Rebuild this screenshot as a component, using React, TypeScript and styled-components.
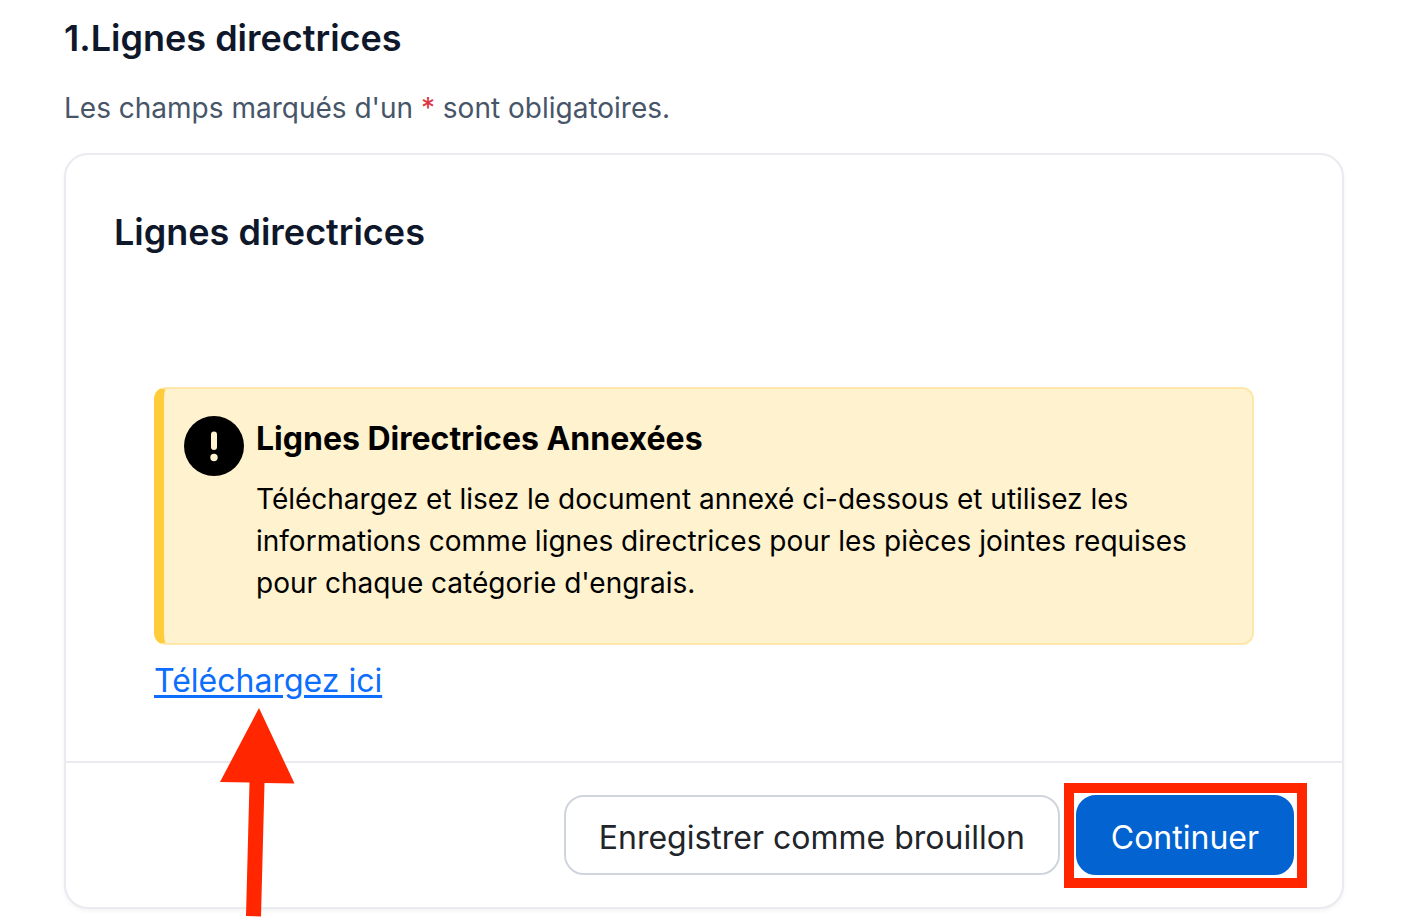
import React from "react";
import styled, { createGlobalStyle } from "styled-components";

const GlobalStyle = createGlobalStyle`
  *, *::before, *::after { box-sizing: border-box; }
  body {
    margin: 0;
    background: #fff;
    color: #000;
    font-family: Inter, "Liberation Sans", sans-serif;
    font-size: 28px;
    line-height: 42px;
  }
  h1, h2, h3, p { margin: 0; }
`;

const Page = styled.main`
  padding: 14px 73px 14px 64px;
`;

const PageTitle = styled.h1`
  margin-bottom: 25px;
  color: #0f172a;
  font-size: 36px;
  font-weight: 600;
  line-height: 48px;
`;

const Hint = styled.p`
  margin-bottom: 24px;
  color: #475569;
`;

const Required = styled.span`
  color: #dc3545;
`;

const Card = styled.section`
  border: 2px solid #eaebf0;
  border-radius: 24px;
  background: #fff;
  box-shadow: 0 2px 4px rgba(16, 24, 40, 0.05);
`;

const CardBody = styled.div`
  padding: 53px 48px 56px;
`;

const CardTitle = styled.h2`
  color: #0f172a;
  font-size: 36px;
  font-weight: 600;
  line-height: 48px;
`;

const Content = styled.div`
  padding: 131px 40px 0;
`;

const Alert = styled.div`
  display: flex;
  align-items: flex-start;
  gap: 12px;
  margin-bottom: 12px;
  padding: 26px 48px 39px 20px;
  border: 2px solid #ffe7ac;
  border-left: 10px solid #ffcd39;
  border-radius: 12px;
  background: #fff2cf;
`;

const AlertIcon = styled.svg`
  flex: none;
  width: 60px;
  height: 60px;
  margin-top: 1px;
`;

const AlertTitle = styled.h3`
  margin-bottom: 15px;
  font-size: 32px;
  font-weight: 700;
  line-height: 48px;
`;

const LinkRow = styled.div`
  position: relative;
  font-size: 32px;
  line-height: 48px;
`;

const DownloadLink = styled.a`
  color: #0d6efd;
  text-decoration: underline;
  text-decoration-thickness: 3px;
  text-underline-offset: 3px;
`;

const Arrow = styled.svg`
  position: absolute;
  top: 48px;
  left: 64px;
  width: 80px;
  height: 212px;
  pointer-events: none;
`;

const CardFooter = styled.footer`
  display: flex;
  justify-content: flex-end;
  gap: 16px;
  padding: 32px 48px;
  border-top: 2px solid #eaebf0;
`;

const Button = styled.button<{ $primary?: boolean }>`
  height: 80px;
  padding: 5px 33px 0;
  border: 2px solid ${(p) => (p.$primary ? "#0263d1" : "#d0d5dd")};
  border-radius: 20px;
  background: ${(p) => (p.$primary ? "#0263d1" : "#fff")};
  color: ${(p) => (p.$primary ? "#fff" : "#212529")};
  font: inherit;
  font-size: 32px;
  line-height: 48px;
  white-space: nowrap;
  cursor: pointer;
`;

const Highlight = styled.div`
  position: relative;
  &::after {
    content: "";
    position: absolute;
    inset: -12px -13px -13px -12px;
    border: 10px solid #ff2600;
    pointer-events: none;
  }
`;

export default function App() {
  return (
    <>
      <GlobalStyle />
      <Page>
        <PageTitle>1.Lignes directrices</PageTitle>
        <Hint>
          Les champs marqués d'un <Required>*</Required> sont obligatoires.
        </Hint>
        <Card>
          <CardBody>
            <CardTitle>Lignes directrices</CardTitle>
            <Content>
              <Alert role="alert">
                <AlertIcon viewBox="0 0 60 60" aria-hidden="true">
                  <circle cx="30" cy="30" r="30" fill="#000" />
                  <rect x="27" y="15.5" width="6" height="18.5" rx="3" fill="#fff2cf" />
                  <circle cx="30" cy="41.5" r="3.7" fill="#fff2cf" />
                </AlertIcon>
                <div>
                  <AlertTitle>Lignes Directrices Annexées</AlertTitle>
                  <p>
                    Téléchargez et lisez le document annexé ci-dessous et utilisez les
                    informations comme lignes directrices pour les pièces jointes requises
                    pour chaque catégorie d'engrais.
                  </p>
                </div>
              </Alert>
              <LinkRow>
                <DownloadLink href="#telecharger">Téléchargez ici</DownloadLink>
                <Arrow viewBox="0 0 80 212" aria-hidden="true">
                  <path
                    d="M41 3 76.500 78.500 46.500 78 43 211.500 28 211 31.500 77.500 2 77Z"
                    fill="#ff2600"
                  />
                </Arrow>
              </LinkRow>
            </Content>
          </CardBody>
          <CardFooter>
            <Button type="button">Enregistrer comme brouillon</Button>
            <Highlight>
              <Button type="button" $primary>
                Continuer
              </Button>
            </Highlight>
          </CardFooter>
        </Card>
      </Page>
    </>
  );
}
